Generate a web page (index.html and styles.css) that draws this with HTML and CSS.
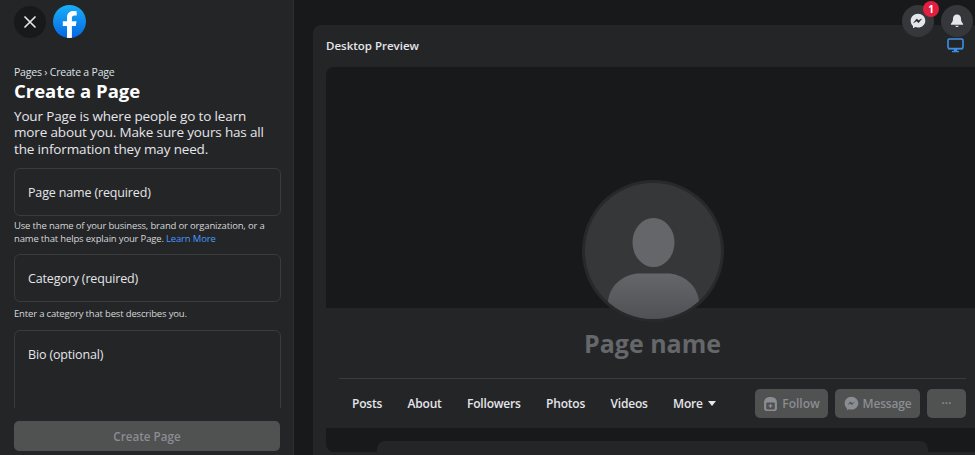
FILE: index.html
```html
<!DOCTYPE html>
<html lang="en">
<head>
<meta charset="utf-8">
<title>Create a Page</title>
<link rel="stylesheet" href="styles.css">
</head>
<body>
<aside class="side">
  <div class="side-top">
    <button class="close" aria-label="Close">
      <svg width="14" height="14" viewBox="0 0 14 14"><path d="M2 2l10 10M12 2L2 12" stroke="#e4e6eb" stroke-width="1.7" stroke-linecap="round"/></svg>
    </button>
    <svg class="fb" width="33" height="33" viewBox="0 0 33 33">
      <defs><linearGradient id="fbg" x1="0" y1="0" x2="0" y2="1"><stop offset="0" stop-color="#19aff9"/><stop offset="1" stop-color="#0567e3"/></linearGradient><clipPath id="fbc"><circle cx="16.5" cy="16.5" r="16.5"/></clipPath></defs>
      <circle cx="16.5" cy="16.5" r="16.5" fill="url(#fbg)"/>
      <path clip-path="url(#fbc)" d="M14 33V21h-4.200v-4.800H14v-3.700c0-4.200 2.500-6.500 6.300-6.500 1.800 0 3.400.3 3.400.3v4.100h-2.100c-2.100 0-2.700 1.300-2.700 2.600v3.200h4.600l-.7 4.800h-3.900v12z" fill="#fff"/>
    </svg>
  </div>
  <div class="side-scroll">
    <div class="crumb">Pages › Create a Page</div>
    <h1 class="title">Create a Page</h1>
    <p class="desc">Your Page is where people go to learn more about you. Make sure yours has all the information they may need.</p>
    <div class="field">Page name (required)</div>
    <p class="help">Use the name of your business, brand or organization, or a name that helps explain your Page. <a class="link">Learn More</a></p>
    <div class="field">Category (required)</div>
    <p class="help help-short">Enter a category that best describes you.</p>
    <div class="field bio">Bio (optional)</div>
  </div>
  <div class="side-foot"><button class="create">Create Page</button></div>
</aside>
<main class="main">
  <div class="top-icons">
    <div class="round">
      <svg width="16" height="16" viewBox="0 0 16 16"><path d="M8 .7C3.900.7.700 3.700.700 7.700c0 2.100.9 3.900 2.300 5.200v2.400l2.200-1.200c.9.300 1.800.4 2.800.4 4.100 0 7.300-3 7.300-6.800S12.100.7 8 .7z" fill="#e4e6eb"/><path d="M3.700 9.700l3-3.800 2 1.700 2.800-1.700-2.900 3.800-2-1.700z" fill="#242526" stroke="#242526" stroke-width=".5"/></svg>
      <span class="badge">1</span>
    </div>
    <div class="round">
      <svg width="16" height="16" viewBox="0 0 16 16"><path d="M8 1.500C5.400 1.500 4 3.400 4 5.800c0 2.600-1.100 3.800-2 4.900-.4.500-.1 1.100.5 1.100h11c.6 0 .9-.6.5-1.100-.9-1.100-2-2.300-2-4.900C12 3.400 10.600 1.500 8 1.500z" fill="#e4e6eb"/><path d="M6.200 12.800h3.600c-.3.800-1 1.200-1.800 1.200s-1.500-.4-1.800-1.200z" fill="#e4e6eb"/></svg>
    </div>
  </div>
  <section class="card">
    <div class="card-head">
      <h2 class="card-title">Desktop Preview</h2>
      <svg class="monitor" width="17" height="15" viewBox="0 0 17 15"><rect x="1" y="1" width="15" height="9.500" rx="1.500" fill="none" stroke="#3d8fe6" stroke-width="1.600"/><path d="M1 10h15v1.500H1zM6.800 11h3.400v2H6.800zM5 13h7v1.200H5z" fill="#3d8fe6"/></svg>
    </div>
    <div class="frame">
      <div class="cover">
        <div class="avatar">
          <svg width="136" height="136" viewBox="0 0 136 136">
            <defs>
              <clipPath id="avc"><circle cx="68" cy="68" r="68"/></clipPath>
              <linearGradient id="bodyg" x1="0" y1="0" x2="0" y2="1"><stop offset="0" stop-color="#65666a"/><stop offset="1" stop-color="#505154"/></linearGradient>
            </defs>
            <circle cx="68" cy="68" r="68" fill="#363739"/>
            <ellipse cx="68.500" cy="59.500" rx="21" ry="24.500" fill="#65666a"/>
            <path clip-path="url(#avc)" d="M23 136v-18c2-17 17-27.500 32-27.500h27c15 0 30 10.500 32 27.500v18z" fill="url(#bodyg)"/>
          </svg>
        </div>
      </div>
      <div class="profile">
        <div class="page-name">Page name</div>
        <div class="tabs">
          <nav class="tab-list">
            <span>Posts</span><span>About</span><span>Followers</span><span>Photos</span><span>Videos</span>
            <span class="more">More <i class="caret"></i></span>
          </nav>
          <div class="actions">
            <button class="act act-follow">
              <svg width="15" height="15" viewBox="0 0 14 14"><path d="M1 6c0-3 2-5 6-5s6 2 6 5v6c0 1-1 2-2 2H3c-1 0-2-1-2-2z" fill="#8a8d91"/><rect x="3" y="6" width="8" height="6.500" rx="1" fill="#505151"/><path d="M7 7.500v3.500M5.200 9.200h3.600" stroke="#8a8d91" stroke-width="1.200"/></svg>
              Follow
            </button>
            <button class="act act-message">
              <svg width="15" height="15" viewBox="0 0 16 16"><path d="M8 .7C3.900.7.700 3.700.700 7.700c0 2.100.9 3.900 2.300 5.200v2.400l2.200-1.200c.9.300 1.800.4 2.800.4 4.100 0 7.300-3 7.300-6.800S12.100.7 8 .7z" fill="#8a8d91"/><path d="M3.700 9.700l3-3.800 2 1.700 2.800-1.700-2.900 3.800-2-1.700z" fill="#505151"/></svg>
              Message
            </button>
            <button class="act act-dots">···</button>
          </div>
        </div>
      </div>
      <div class="below"><div class="below-card"></div></div>
    </div>
  </section>
</main>
</body>
</html>
```
FILE: styles.css
```css
* { box-sizing: border-box; }
body {
  margin: 0;
  height: 455px;
  display: flex;
  overflow: hidden;
  background: #18191a;
  color: #e4e6eb;
  font-family: "Open Sans", "Noto Sans", sans-serif;
}
.side {
  width: 294px;
  flex: none;
  height: 455px;
  display: flex;
  flex-direction: column;
  background: #242526;
  border-right: 1px solid #2f3031;
}
.side-top {
  display: flex;
  align-items: center;
  gap: 7px;
  padding: 3px 14px 0;
  height: 40px;
  flex: none;
}
.close {
  width: 32px;
  height: 32px;
  border: 0;
  border-radius: 50%;
  background: #18191a;
  display: flex;
  align-items: center;
  justify-content: center;
  padding: 0;
}
.fb { display: block; }
.side-scroll {
  flex: 1;
  min-height: 0;
  overflow: hidden;
  padding: 25px 12px 0 14px;
}
.crumb { font-size: 10.5px; line-height: 14px; color: #dfe1e5; letter-spacing: -.2px; }
.title { margin: 0; font-size: 18.5px; line-height: 24px; font-weight: 700; color: #fff; }
.desc { margin: 5px 0 0; font-size: 13.5px; line-height: 16.4px; color: #e4e6eb; letter-spacing: -.15px; }
.field {
  margin-top: 11px;
  height: 48px;
  padding: 1px 13px 0;
  display: flex;
  align-items: center;
  border: 1px solid #3a3b3c;
  border-radius: 6px;
  font-size: 12.5px;
  letter-spacing: -.15px;
  color: #e4e6eb;
}
.help {
  margin: 3px 0 0;
  font-size: 9.5px;
  line-height: 13px;
  letter-spacing: -.17px;
  color: #d5d7db;
}
.help + .field { margin-top: 9px; }
.help-short { margin-top: 5px; }
.help-short + .field { margin-top: 10px; }
.bio {
  height: 100px;
  align-items: flex-start;
  padding-top: 15px;
}
.link { color: #4599ff; }
.side-foot {
  flex: none;
  height: 47px;
  padding: 13px 14px 0;
  background: #242526;
}
.create {
  width: 266px;
  height: 30px;
  border: 0;
  border-radius: 5px;
  background: #505151;
  color: #8a8d91;
  font: 600 11.7px "Open Sans", "Noto Sans", sans-serif;
  padding: 0;
}
.main {
  flex: 1;
  min-width: 0;
  position: relative;
  padding: 25px 0 0 19px;
  overflow: hidden;
}
.top-icons {
  position: absolute;
  top: 5px;
  right: 2px;
  display: flex;
  gap: 7px;
  z-index: 2;
}
.round {
  position: relative;
  width: 32px;
  height: 32px;
  border-radius: 50%;
  background: #36373a;
  display: flex;
  align-items: center;
  justify-content: center;
}
.badge {
  position: absolute;
  top: -4px;
  right: -5px;
  width: 16px;
  height: 16px;
  border-radius: 50%;
  background: #e41e3f;
  color: #fff;
  font-size: 10px;
  font-weight: 700;
  line-height: 16px;
  text-align: center;
}
.card {
  width: 720px;
  height: 440px;
  background: #242526;
  border-radius: 8px 0 0 0;
  padding: 0 0 0 13px;
  display: flex;
  flex-direction: column;
}
.card-head {
  height: 42px;
  flex: none;
  padding: 13px 0 0 0;
  position: relative;
}
.card-title { margin: 0; font-size: 11.5px; line-height: 16px; font-weight: 600; color: #e4e6eb; }
.monitor { position: absolute; top: 13px; left: 621px; }
.frame {
  height: 385px;
  flex: none;
  border-radius: 8px 0 0 8px;
  background: #18191a;
  overflow: hidden;
  display: flex;
  flex-direction: column;
}
.cover {
  height: 241px;
  flex: none;
  position: relative;
  z-index: 1;
}
.avatar {
  position: absolute;
  left: 256px;
  top: 113px;
  width: 142px;
  height: 142px;
  border-radius: 50%;
  background: #28292b;
  display: flex;
  align-items: center;
  justify-content: center;
}
.avatar svg { display: block; }
.profile {
  height: 120px;
  flex: none;
  background: #242526;
  padding: 0 0 0 13px;
}
.page-name {
  height: 70px;
  padding-top: 18px;
  width: 627px;
  text-align: center;
  font-size: 25px;
  line-height: 34px;
  font-weight: 700;
  color: #65676b;
}
.tabs {
  width: 627px;
  height: 50px;
  border-top: 1px solid #3a3b3c;
  display: flex;
  align-items: center;
  justify-content: space-between;
  padding: 0 0 0 13px;
}
.tab-list { display: flex; gap: 25.4px; font-size: 12px; letter-spacing: -.2px; font-weight: 600; color: #e4e6eb; }
.more { display: flex; align-items: center; gap: 5px; }
.caret {
  display: block;
  width: 0;
  height: 0;
  border: 4px solid transparent;
  border-top: 5px solid #e4e6eb;
  border-bottom: 0;
}
.actions { display: flex; gap: 7px; }
.act {
  height: 29px;
  border: 0;
  border-radius: 5px;
  background: #505151;
  color: #8a8d91;
  font: 600 12px "Open Sans", "Noto Sans", sans-serif;
  display: flex;
  align-items: center;
  justify-content: center;
  gap: 4px;
  padding: 0;
}
.act-follow { width: 73px; }
.act-message { width: 85px; letter-spacing: -.2px; }
.act-dots { width: 39px; }
.below {
  flex: 1;
  padding: 13px 0 0 51px;
}
.below-card {
  width: 551px;
  height: 30px;
  background: #242526;
  border-radius: 8px 8px 0 0;
}
```
